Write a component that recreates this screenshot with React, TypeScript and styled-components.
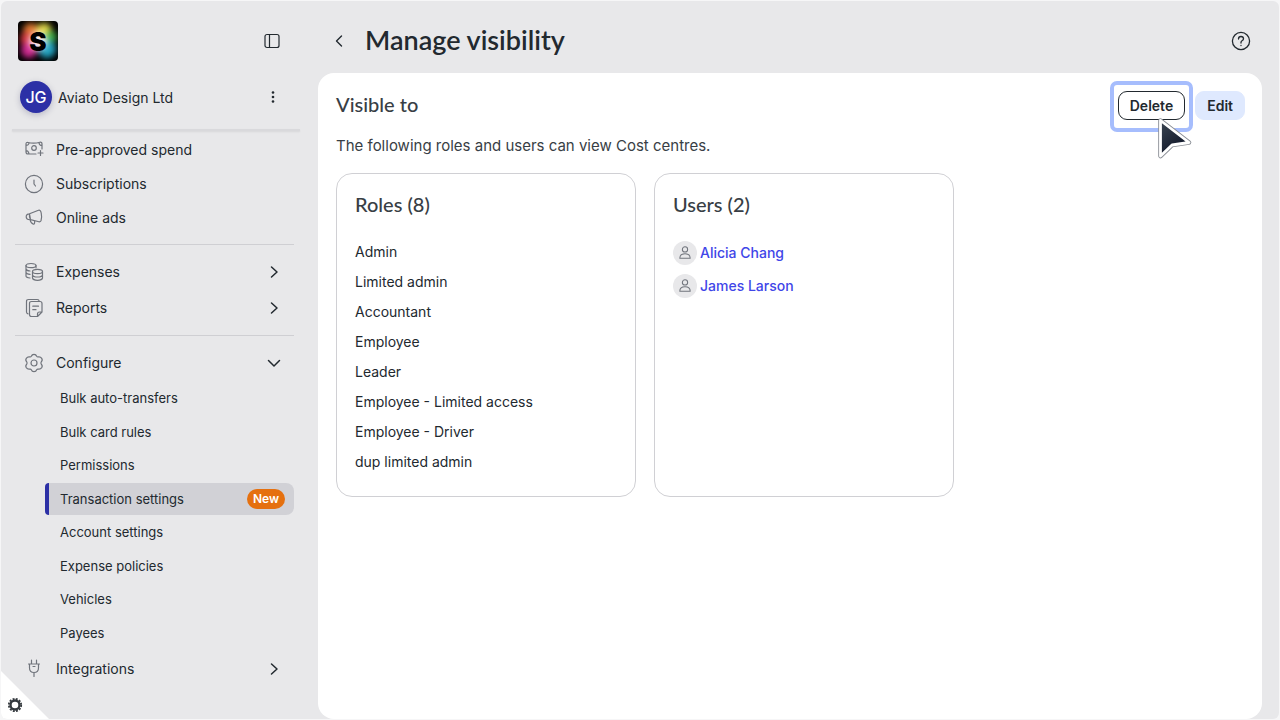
import React from 'react';
import styled, { createGlobalStyle } from 'styled-components';

const GlobalStyle = createGlobalStyle`
  *, *::before, *::after { box-sizing: border-box; }
  body {
    margin: 0;
    background: #f6f6f7;
    font-family: Inter, "Liberation Sans", sans-serif;
    font-size: 14px;
    color: #22292f;
  }
  h1, h2, h3, p, ul { margin: 0; padding: 0; }
  ul { list-style: none; }
  svg { display: block; flex: none; }
  button { font: inherit; color: inherit; cursor: pointer; }
  a { color: inherit; text-decoration: none; }
`;

const Frame = styled.div`
  display: flex;
  min-height: 100vh;
  padding: 1px;
`;

const Shell = styled.div`
  position: relative;
  flex: 1;
  display: grid;
  grid-template-columns: 317px minmax(0, 1fr);
  background: #e8e8ea;
  border-radius: 6px;
  overflow: hidden;
`;

const Sidebar = styled.aside`
  display: flex;
  flex-direction: column;
  padding: 20px 18px 30px 11px;
`;

const BrandRow = styled.div`
  display: flex;
  align-items: center;
  justify-content: space-between;
  padding: 0 18px 0 6px;
`;

const IconButton = styled.button`
  display: flex;
  align-items: center;
  justify-content: center;
  width: 20px;
  height: 20px;
  padding: 0;
  border: 0;
  background: none;
`;

const AccountRow = styled.div`
  display: flex;
  align-items: center;
  gap: 6px;
  margin-top: 20px;
  padding: 0 17px 0 8px;
`;

const Avatar = styled.span`
  display: flex;
  align-items: center;
  justify-content: center;
  width: 32px;
  height: 32px;
  border-radius: 50%;
  background: #2c30a6;
  color: #fff;
  font-size: 16px;
  font-weight: 500;
  box-shadow: 0 2px 6px rgba(40, 40, 90, 0.25);
`;

const AccountName = styled.span`
  flex: 1;
  font-size: 14px;
  line-height: 20px;
  padding-top: 2px;
`;

const HeadRule = styled.div`
  height: 2px;
  margin-top: 16px;
  background: #d9d9dc;
  box-shadow: 0 1px 2px rgba(0, 0, 0, 0.08);
`;

const Nav = styled.nav`
  padding: 2px 6px 0 3px;
`;

const Group = styled.ul`
  & + & {
    margin-top: 9px;
    padding-top: 9px;
    border-top: 1px solid #cfcfd3;
  }
`;

const NavLink = styled.a<{ $height: number }>`
  display: flex;
  align-items: center;
  gap: 12px;
  height: ${(p) => p.$height}px;
  padding: 0 10px 0 9px;
  font-size: 14px;
  line-height: 20px;
  > svg { color: #70747c; }
`;

const NavLabel = styled.span`
  flex: 1;
  & + svg { color: #22292f; }
`;

const SubList = styled.ul`
  display: grid;
  align-content: space-between;
  min-height: 267px;
  margin: 1px 0 2px 30px;
`;

const SubLink = styled.a<{ $active?: boolean }>`
  display: flex;
  align-items: center;
  justify-content: space-between;
  height: 32px;
  padding: 0 9px 0 11px;
  border-left: 4px solid ${(p) => (p.$active ? '#2c30a6' : 'transparent')};
  border-radius: 4px 8px 8px 4px;
  background: ${(p) => (p.$active ? '#d1d1d6' : 'none')};
  font-size: 13px;
  line-height: 20px;
`;

const NewBadge = styled.span`
  padding: 0 6px;
  border-radius: 10px;
  background: #e5700f;
  color: #fff;
  font-size: 12px;
  font-weight: 600;
  line-height: 20px;
`;

const Main = styled.main`
  display: flex;
  flex-direction: column;
  padding-right: 17px;
`;

const TopBar = styled.header`
  display: flex;
  align-items: center;
  height: 72px;
  padding: 8px 11px 0;
`;

const PageTitle = styled.h1`
  flex: 1;
  margin-left: 16px;
  padding-bottom: 2px;
  font-family: Lato, sans-serif;
  font-size: 27px;
  font-weight: 600;
  line-height: 36px;
`;

const Panel = styled.section`
  flex: 1;
  padding: 18px;
  background: #fff;
  border-radius: 16px;
`;

const PanelHead = styled.div`
  display: flex;
  align-items: flex-start;
  justify-content: space-between;
`;

const Heading = styled.h2`
  font-family: Lato, sans-serif;
  font-size: 20px;
  font-weight: 500;
  line-height: 26px;
  color: #383e45;
`;

const Actions = styled.div`
  display: flex;
  gap: 10px;
  margin-right: -1px;
`;

const Button = styled.button<{ $tonal?: boolean }>`
  height: 29px;
  padding: 0 11px;
  border: 1px solid ${(p) => (p.$tonal ? '#dfe9fe' : '#22292f')};
  border-radius: 9px;
  background: ${(p) => (p.$tonal ? '#dfe9fe' : '#fff')};
  font-size: 14px;
  font-weight: 600;
  line-height: 20px;
`;

const Highlighted = styled.span`
  position: relative;
  display: flex;
`;

const FocusRing = styled.span`
  position: absolute;
  inset: -10px -8px -12px;
  border: 4px solid #a6bdfd;
  border-radius: 7px;
  pointer-events: none;
`;

const Pointer = styled.svg`
  position: absolute;
  top: 26px;
  left: 40px;
  z-index: 1;
  pointer-events: none;
`;

const Intro = styled.p`
  margin-top: 14px;
  font-size: 15px;
  line-height: 24px;
  color: #383e45;
`;

const Cards = styled.div`
  display: flex;
  gap: 18px;
  margin-top: 15px;
`;

const Card = styled.section`
  flex: 0 1 300px;
  padding: 17px 18px 19px;
  border: 1px solid #d0d0d4;
  border-radius: 16px;
`;

const RoleList = styled.ul`
  margin-top: 20px;
  line-height: 30px;
`;

const UserList = styled.ul`
  display: flex;
  flex-direction: column;
  gap: 9px;
  margin-top: 24px;
`;

const UserLink = styled.a`
  display: flex;
  align-items: center;
  gap: 3px;
  color: #3f46e8;
  font-weight: 500;
  line-height: 24px;
`;

const UserBadge = styled.span`
  display: flex;
  align-items: center;
  justify-content: center;
  width: 24px;
  height: 24px;
  border-radius: 50%;
  background: #e8e8ea;
  color: #70747c;
`;

const CornerTab = styled.button`
  position: absolute;
  left: 0;
  bottom: 0;
  width: 48px;
  height: 48px;
  padding: 0;
  border: 0;
  background: none;
`;

const Line = ({ children, size = 20, width = 1.2 }: { children: React.ReactNode; size?: number; width?: number }) => (
  <svg width={size} height={size} viewBox="0 0 20 20" fill="none" stroke="currentColor" strokeWidth={width} strokeLinecap="round" strokeLinejoin="round" aria-hidden="true">
    {children}
  </svg>
);

const icons = {
  cash: (
    <Line>
      <path d="M12 14H4Q2 14 2 12V4Q2 2 4 2.500Q10 4 16 2.200Q18 2 18 4V9M2 5.500Q4.500 5.500 5 3M2 10.500Q4.500 10.500 5 13.800M15 2.700Q15.300 5.500 18 5.500M16.500 10.500V15.500M14 13H19" />
      <circle cx="10" cy="8" r="2.300" />
    </Line>
  ),
  clock: (
    <Line>
      <circle cx="10" cy="10" r="8.600" />
      <path d="M10 6V10L11.500 12" />
    </Line>
  ),
  ads: (
    <Line>
      <path d="M5.500 5.800L14.500 2.200Q16.500 1.600 17.200 5Q18.200 9.500 17 12.800Q16 14.500 14 13.500L6.500 11.700ZM5.500 5.800Q2 6 2.200 9Q2.500 12 6.500 11.700Q5 9 5.500 5.800M6.200 12Q6.500 15 9.500 16.200Q11 16.300 10.500 12.800" />
    </Line>
  ),
  coins: (
    <Line>
      <ellipse cx="7" cy="3.600" rx="5" ry="2.100" />
      <path d="M2 3.600V14Q2 15.500 6 16M12 3.600V5.800M2 7Q2.500 8.800 6 9M2 10.500Q2.500 12 6 12.400" />
      <ellipse cx="13.500" cy="9.500" rx="5" ry="2.100" />
      <path d="M8.500 9.500V16Q9 18.300 13.500 18.300Q18 18.300 18.500 16V9.500M8.500 12.800Q9 15 13.500 15Q18 15 18.500 12.800" />
    </Line>
  ),
  reports: (
    <Line>
      <path d="M13.500 18.500H7.500Q5.500 18.500 5.500 16.500V5.500Q5.500 3.500 7.500 3.500H16Q18 3.500 18 5.500V14ZM13.500 18.500V16Q13.500 14 15.500 14H18M8.800 8.200H14.500M8.800 11.700H12" />
      <path d="M4 15.800Q2.500 15.500 2.500 14V3.500Q2.500 1.500 4.500 1.500H13Q14.500 1.500 15 2.500" />
    </Line>
  ),
  gear: (
    <Line>
      <path d="M7.300 3.200Q8 1.300 10 1.300Q12 1.300 12.700 3.200Q13.200 4.200 14.500 3.900Q16.500 3.600 17.700 5.400Q18.900 7.300 17.300 8.700Q16.500 10 17.300 11.300Q18.900 12.700 17.700 14.600Q16.500 16.400 14.500 16.100Q13.200 15.800 12.700 16.800Q12 18.700 10 18.700Q8 18.700 7.300 16.800Q6.800 15.800 5.500 16.100Q3.500 16.400 2.300 14.600Q1.100 12.700 2.700 11.300Q3.500 10 2.700 8.700Q1.100 7.300 2.300 5.400Q3.500 3.600 5.500 3.900Q6.800 4.200 7.300 3.200Z" />
      <circle cx="10" cy="10" r="3" />
    </Line>
  ),
  plug: (
    <Line>
      <path d="M7.500 1V5M12.500 1V5M4.500 5H15.500M5.500 5V9Q5.500 13.500 10 13.500Q14.500 13.500 14.500 9V5M9 7.500H11M10 13.500V17.500" />
    </Line>
  ),
};

const ChevronRight = () => (
  <Line width={1.5}><path d="M7.500 5L13 10L7.500 15" /></Line>
);
const ChevronDown = () => (
  <Line width={1.5}><path d="M4.500 7.500L10 13L15.500 7.500" /></Line>
);

const Logo = () => (
  <svg width="40" height="40" viewBox="0 0 40 40" role="img" aria-label="S">
    <defs>
      <clipPath id="logo-clip"><rect width="40" height="40" rx="4" /></clipPath>
      <filter id="logo-blur" x="-50%" y="-50%" width="200%" height="200%" colorInterpolationFilters="sRGB"><feGaussianBlur stdDeviation="3" /></filter>
    </defs>
    <g clipPath="url(#logo-clip)">
      <rect width="40" height="40" fill="#000" />
      <g filter="url(#logo-blur)">
        <circle cx="13" cy="10" r="8" fill="#e07a30" />
        <circle cx="9" cy="18" r="7" fill="#d83a40" />
        <circle cx="11" cy="29" r="8" fill="#cf2a90" />
        <circle cx="26" cy="10" r="8" fill="#e2d848" />
        <circle cx="33" cy="16" r="6" fill="#3fae48" />
        <circle cx="29" cy="28" r="9" fill="#22a3c0" />
        <circle cx="20" cy="20" r="9" fill="#ffeef0" />
      </g>
      <text x="20" y="29.500" textAnchor="middle" fontFamily="Inter, sans-serif" fontWeight="900" fontSize="26" fill="#000">S</text>
    </g>
  </svg>
);

const subItems = [
  'Bulk auto-transfers',
  'Bulk card rules',
  'Permissions',
  'Transaction settings',
  'Account settings',
  'Expense policies',
  'Vehicles',
  'Payees',
];

const roles = [
  'Admin',
  'Limited admin',
  'Accountant',
  'Employee',
  'Leader',
  'Employee - Limited access',
  'Employee - Driver',
  'dup limited admin',
];

const users = ['Alicia Chang', 'James Larson'];

type ItemProps = { icon: keyof typeof icons; label: string; height?: number; end?: React.ReactNode };

const Item = ({ icon, label, height = 36, end }: ItemProps) => (
  <NavLink href="#" $height={height}>
    {icons[icon]}
    <NavLabel>{label}</NavLabel>
    {end}
  </NavLink>
);

export default function App() {
  return (
    <>
      <GlobalStyle />
      <Frame>
        <Shell>
          <Sidebar>
            <BrandRow>
              <Logo />
              <IconButton aria-label="Collapse sidebar">
                <Line>
                  <rect x="3" y="3.500" width="14" height="13" rx="2" />
                  <path d="M7.500 3.500V16.500" />
                </Line>
              </IconButton>
            </BrandRow>
            <AccountRow>
              <Avatar>JG</Avatar>
              <AccountName>Aviato Design Ltd</AccountName>
              <IconButton aria-label="Account options">
                <svg width="20" height="20" viewBox="0 0 20 20" fill="currentColor">
                  <circle cx="10" cy="5.500" r="1.300" />
                  <circle cx="10" cy="10" r="1.300" />
                  <circle cx="10" cy="14.500" r="1.300" />
                </svg>
              </IconButton>
            </AccountRow>
            <HeadRule />
            <Nav>
              <Group>
                <li><Item icon="cash" label="Pre-approved spend" height={34} /></li>
                <li><Item icon="clock" label="Subscriptions" height={34} /></li>
                <li><Item icon="ads" label="Online ads" height={34} /></li>
              </Group>
              <Group>
                <li><Item icon="coins" label="Expenses" end={<ChevronRight />} /></li>
                <li><Item icon="reports" label="Reports" end={<ChevronRight />} /></li>
              </Group>
              <Group>
                <li>
                  <Item icon="gear" label="Configure" end={<ChevronDown />} />
                  <SubList>
                    {subItems.map((label) => {
                      const active = label === 'Transaction settings';
                      return (
                        <li key={label}>
                          <SubLink href="#" $active={active}>
                            {label}
                            {active && <NewBadge>New</NewBadge>}
                          </SubLink>
                        </li>
                      );
                    })}
                  </SubList>
                </li>
                <li><Item icon="plug" label="Integrations" end={<ChevronRight />} /></li>
              </Group>
            </Nav>
          </Sidebar>

          <Main>
            <TopBar>
              <IconButton aria-label="Back">
                <Line width={1.4}><path d="M12.500 5L7.500 10L12.500 15" /></Line>
              </IconButton>
              <PageTitle>Manage visibility</PageTitle>
              <IconButton aria-label="Help">
                <Line width={1.3}>
                  <circle cx="10" cy="10" r="8.600" />
                  <path d="M7.500 8Q7.500 5.500 10 5.500Q12.500 5.500 12.500 7.800Q12.500 9 11 9.800Q10 10.400 10 11.500V12M10 14.400V14.500" />
                </Line>
              </IconButton>
            </TopBar>
            <Panel>
              <PanelHead>
                <Heading>Visible to</Heading>
                <Actions>
                  <Highlighted>
                    <Button>Delete</Button>
                    <FocusRing />
                    <Pointer width="36" height="44" viewBox="0 0 36 44" aria-hidden="true">
                      <defs>
                        <linearGradient id="pointer-fill" x1="0" y1="0" x2="0.600" y2="1">
                          <stop offset="0" stopColor="#3c4653" />
                          <stop offset="1" stopColor="#0b1224" />
                        </linearGradient>
                      </defs>
                      <path d="M2.500 3.500L31 25.500L14 28L2.500 39Z" fill="none" stroke="#8b8f96" strokeWidth="4.600" strokeLinejoin="round" />
                      <path d="M2.500 3.500L31 25.500L14 28L2.500 39Z" fill="url(#pointer-fill)" stroke="#fff" strokeWidth="2.800" strokeLinejoin="round" />
                    </Pointer>
                  </Highlighted>
                  <Button $tonal>Edit</Button>
                </Actions>
              </PanelHead>
              <Intro>The following roles and users can view Cost centres.</Intro>
              <Cards>
                <Card>
                  <Heading as="h3">Roles (8)</Heading>
                  <RoleList>
                    {roles.map((role) => <li key={role}>{role}</li>)}
                  </RoleList>
                </Card>
                <Card>
                  <Heading as="h3">Users (2)</Heading>
                  <UserList>
                    {users.map((user) => (
                      <li key={user}>
                        <UserLink href="#">
                          <UserBadge>
                            <Line size={16} width={1.3}>
                              <circle cx="10" cy="5.500" r="3.300" />
                              <path d="M3.500 16.500Q3.500 11 10 11Q16.500 11 16.500 16.500Z" />
                            </Line>
                          </UserBadge>
                          {user}
                        </UserLink>
                      </li>
                    ))}
                  </UserList>
                </Card>
              </Cards>
            </Panel>
          </Main>

          <CornerTab aria-label="Preferences">
            <svg width="48" height="48" viewBox="0 0 48 48">
              <path d="M0 0L48 48H0Z" fill="#fff" />
              <g fill="none" stroke="#33383d">
                <circle cx="14" cy="34" r="4.500" strokeWidth="2.400" />
                <circle cx="14" cy="34" r="6.200" strokeWidth="1.800" strokeDasharray="1.950 1.300" />
              </g>
            </svg>
          </CornerTab>
        </Shell>
      </Frame>
    </>
  );
}
